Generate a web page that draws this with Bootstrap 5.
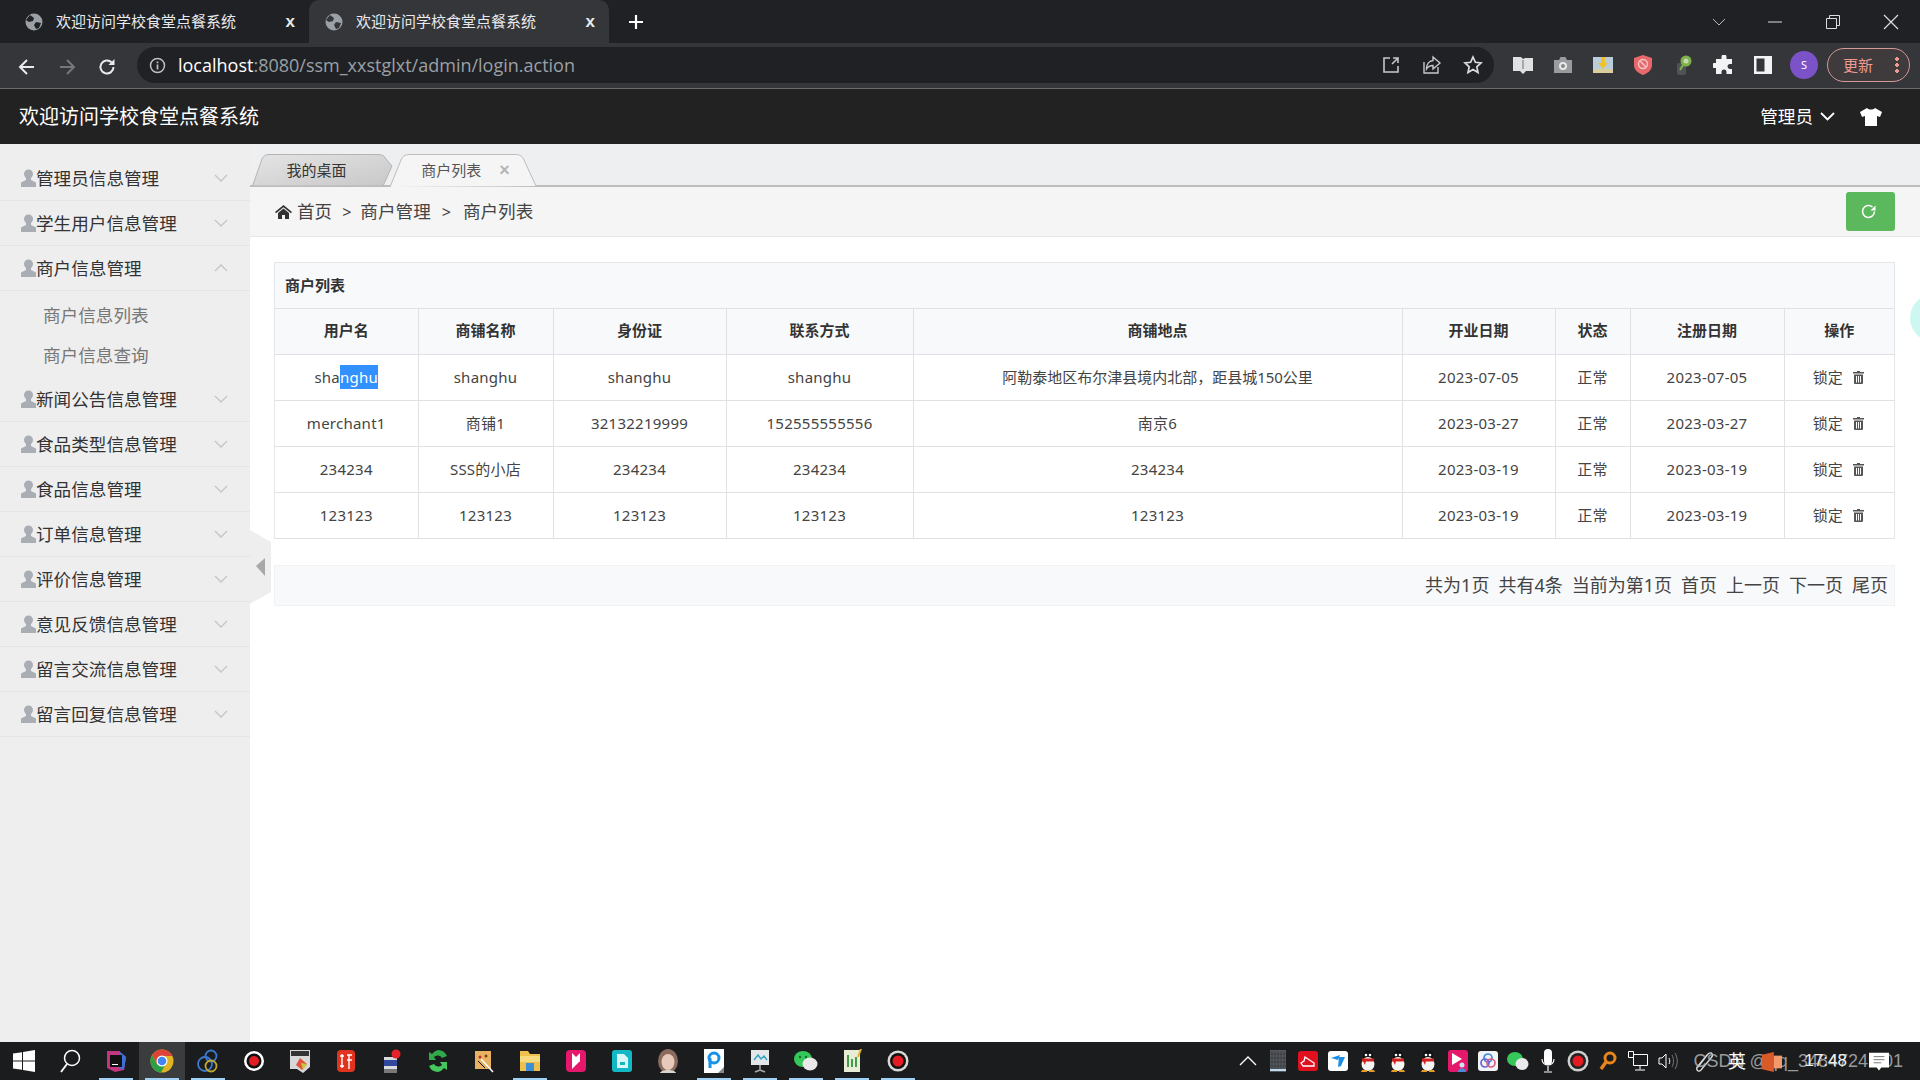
<!DOCTYPE html>
<html lang="zh-CN">
<head>
    <title>欢迎访问学校食堂点餐系统</title>
    <meta charset="utf-8">
    <link href="https://cdn.jsdelivr.net/npm/bootstrap@5.3.3/dist/css/bootstrap.min.css" rel="stylesheet">
    <style>
        html, body { height: 100%; overflow: hidden; }
        body { font-family: "Noto Sans", "Noto Sans CJK SC", sans-serif; color: #333; background: #fff; }

        /* browser window */
        .tabstrip { height: 43px; background: #202124; color: #e8eaed; padding-left: 9px; }
        .btab { width: 300px; height: 43px; padding: 0 14px 0 15px; font-size: 15px; }
        .btab-on { background: #35363a; border-radius: 10px 10px 0 0; }
        .btab-x { font-size: 17px; line-height: 1; margin-left: auto; font-family: "Liberation Sans", sans-serif; font-weight: 700; }
        .plus { margin-left: 15px; width: 24px; }
        .winbtns { margin-left: auto; }
        .winbtn { width: 58px; height: 43px; }
        .winbtn-first { padding-left: 4px; }
        .toolbar { height: 46px; background: #35363a; border-bottom: 1px solid #6a6b6e; padding: 0 0 1px 17px; }
        .navbtn { width: 40px; }
        .omni { height: 36px; width: 1357px; background: #202124; border-radius: 18px; padding: 0 11px 0 12px; color: #9aa0a6; font-family: "Open Sans", sans-serif; font-size: 18px; }
        .omni b { font-weight: 400; color: #fff; }
        .omni span { margin-left: 12px; }
        .omni-end { margin-left: auto; gap: 21px; }
        .extrow { margin-left: 19px; gap: 20px; }
        .avatar { width: 28px; height: 28px; margin-left: -3px; border-radius: 50%; background: #7b52c7; color: #fff; font-size: 11px; }
        .updbtn { margin-left: 9px; width: 83px; height: 34px; border: 1px solid #d69a96; border-radius: 17px; color: #ee9a92; font-size: 15px; padding: 0 10px 0 15px; background: #3f3a3b; }
        .updbtn i { margin-left: auto; width: 4px; height: 18px; background: radial-gradient(circle, #ee9a92 1.8px, transparent 2px) 0 0 / 4px 6px; }

        /* app */
        .apphead { height: 55px; background: #222; color: #fff; padding: 0 38px 0 19px; font-size: 20px; }
        .appuser { font-size: 17.6px; gap: 7px; margin-right: 25px; }
        .appbody { min-height: 0; }
        .sidenav { width: 250px; background: #eeeeef; padding-top: 12px; flex: none; }
        .sideitem { height: 45px; border-bottom: 1px solid #e5e5e6; padding: 0 22px 0 21px; font-size: 17.6px; color: #333; }
        .sideitem .chev { margin-left: auto; }
        .subitems { height: 86px; padding-top: 4px; font-size: 17.6px; color: #777; }
        .subitems div { height: 40px; padding-left: 43px; }
        .mainpane { min-width: 0; }
        .tabbar { height: 43px; background: #eeeff1; border-bottom: 2px solid #bdbdbd; padding: 10px 0 0 2px; }
        .ptab { width: 141px; height: 32px; font-size: 15px; color: #333; padding-right: 12px; }
        .ptab svg { position: absolute; left: 0; top: 0; }
        .ptab span { position: relative; }
        .ptab-two { width: 147px; margin-left: -3px; margin-bottom: -2px; height: 34px; color: #555; padding: 0 0 2px 4px; }
        .ptab-close { color: #b5b5b5; font-size: 18px; line-height: 1; margin-left: 18px; font-family: "Liberation Sans", sans-serif; font-weight: 700; }
        .crumbs { height: 50px; background: #f5f5f5; border-bottom: 1px solid #e7e7e7; padding: 0 25px 0 25px; font-size: 17.6px; color: #444; }
        .crumbs .sep { margin: 0 9px 0 10px; font-size: 16px; }
        .crumbs .sep2 { margin: 0 12px 0 11px; font-size: 16px; }
        .crumbs svg { margin-right: 5px; }
        .refresh { width: 49px; height: 39px; padding: 0; background: #5cb85c; border: 0; border-radius: 3px; }
        .content { padding: 25px 25px 0 24px; }
        .listbox { border: 1px solid #e4e6e9; border-bottom: 0; }
        .listtitle { height: 45px; background: #f7f9fb; padding-left: 10px; font-size: 15px; font-weight: 700; }
        .shoptable { table-layout: fixed; width: 100%; margin: 0; --bs-table-border-color: #dfe1e4; color: #444; font-size: 15px; letter-spacing: .25px; }
        .shoptable th, .shoptable td { height: 46px; padding: 0; text-align: center; vertical-align: middle; }
        .shoptable th { background: #f7f9fb; color: #333; font-size: 15px; font-weight: 700; letter-spacing: 0; padding-bottom: 2px; }
        .shoptable tr > :first-child { border-left: 0; }
        .shoptable tr > :last-child { border-right: 0; }
        .c1 { width: 143px; } .c2 { width: 135px; } .c3 { width: 173px; } .c4 { width: 187px; }
        .c5 { width: 489px; } .c6 { width: 153px; } .c7 { width: 75px; } .c8 { width: 154px; }
        .picked { background: #3390ff; color: #fff; padding: 2px 0; }
        .shoptable .addr { letter-spacing: 0; }
        .shoptable .lockact { font-size: 15px; letter-spacing: 0; padding-right: 2px; }
        .lockact svg { margin-left: 10px; vertical-align: -1px; }
        .pager { margin-top: 26px; height: 41px; background: #f7f9fb; border: 1px solid #f0f2f4; padding-right: 6px; font-size: 18px; gap: 9px; color: #444; }
        .drawer { position: absolute; left: 250px; top: 386px; }
        .tealdot { position: absolute; right: -38px; top: 150px; width: 48px; height: 48px; border-radius: 50%; background: #cdf8f2; }

        /* windows taskbar */
        .taskbar { height: 38px; background: #1b1c1d; flex: none; padding-left: 1px; }
        .tbslot { width: 46px; height: 38px; position: relative; flex: none; }
        .tbslot-run::after { content: ""; position: absolute; left: 6px; right: 6px; bottom: 0; height: 2px; background: #9fd0f5; }
        .tbslot-act { background: #3b3c3d; }
        .tray { margin-left: auto; position: relative; color: #fff; }
        .trayslot { width: 30px; height: 38px; flex: none; }
        .tray-gap { width: 237px; flex: none; }
        .watermark { position: absolute; right: 17px; top: 6px; font-family: "Liberation Sans", sans-serif; font-size: 18px; line-height: 26px; color: #b0b0b0; opacity: .85; white-space: nowrap; }
        .ime { position: absolute; right: 174px; top: 7px; font-size: 18px; line-height: 24px; color: #fff; }
        .clock { position: absolute; right: 73px; top: 8px; font-size: 17px; line-height: 22px; color: #eee; font-family: "Liberation Sans", sans-serif; }
        .overlayico { position: absolute; top: 9px; }
        .clipico { right: 205px; }
        .pptico { right: 138px; top: 10px; }
        .noteico { right: 31px; }
    </style>
</head>
<body class="d-flex flex-column">

<div class="tabstrip d-flex align-items-center flex-none">
    <div class="btab d-flex align-items-center gap-2">
        <svg width="20" height="20" viewBox="0 0 20 20"><circle cx="10" cy="10" r="8.5" fill="#9aa0a6"/><path d="M6 3l4 3-1 3-4 1-3-2zM12 10l5 1-2 5-3 1-2-4z" fill="#202124"/></svg>
        <span class="ms-1">欢迎访问学校食堂点餐系统</span><span class="btab-x">x</span>
    </div>
    <div class="btab btab-on d-flex align-items-center gap-2">
        <svg width="20" height="20" viewBox="0 0 20 20"><circle cx="10" cy="10" r="8.5" fill="#9aa0a6"/><path d="M6 3l4 3-1 3-4 1-3-2zM12 10l5 1-2 5-3 1-2-4z" fill="#35363a"/></svg>
        <span class="ms-1">欢迎访问学校食堂点餐系统</span><span class="btab-x">x</span>
    </div>
    <div class="plus d-flex align-items-center justify-content-center">
        <svg width="18" height="18" viewBox="0 0 18 18"><path d="M9 2v14M2 9h14" stroke="#fff" stroke-width="2.2"/></svg>
    </div>
    <div class="winbtns d-flex">
        <div class="winbtn winbtn-first d-flex align-items-center justify-content-center"><svg width="14" height="8" viewBox="0 0 14 8"><path d="M1 1l6 6 6-6" fill="none" stroke="#bbb"/></svg></div>
        <div class="winbtn d-flex align-items-center justify-content-center"><svg width="14" height="4" viewBox="0 0 14 4"><path d="M0 2h14" stroke="#ddd"/></svg></div>
        <div class="winbtn d-flex align-items-center justify-content-center"><svg width="14" height="14" viewBox="0 0 14 14"><path d="M.5 3.5h10v10H.5zM3.5 3V.5h10v10H11" fill="none" stroke="#ddd"/></svg></div>
        <div class="winbtn d-flex align-items-center justify-content-center"><svg width="16" height="16" viewBox="0 0 16 16"><path d="M1 1l14 14M15 1L1 15" stroke="#ddd" stroke-width="1.2"/></svg></div>
    </div>
</div>

<div class="toolbar d-flex align-items-center flex-none">
    <div class="navbtn"><svg width="20" height="20" viewBox="0 0 20 20"><path d="M17 10H4M10 3l-7 7 7 7" fill="none" stroke="#e8eaed" stroke-width="2"/></svg></div>
    <div class="navbtn"><svg width="20" height="20" viewBox="0 0 20 20"><path d="M3 10h13M10 3l7 7-7 7" fill="none" stroke="#75777a" stroke-width="2"/></svg></div>
    <div class="navbtn"><svg width="20" height="20" viewBox="0 0 20 20"><path d="M16.5 10a6.5 6.5 0 1 1-2-4.7" fill="none" stroke="#e8eaed" stroke-width="2"/><path d="M17.5 2v6h-6z" fill="#e8eaed"/></svg></div>
    <div class="omni d-flex align-items-center">
        <svg width="17" height="17" viewBox="0 0 17 17"><circle cx="8.5" cy="8.5" r="7" fill="none" stroke="#bdc1c6" stroke-width="1.5"/><path d="M8.5 7.5v5M8.5 4.5v1.7" stroke="#bdc1c6" stroke-width="1.7"/></svg>
        <span><b>localhost</b>:8080/ssm_xxstglxt/admin/login.action</span>
        <div class="omni-end d-flex align-items-center">
            <svg width="20" height="20" viewBox="0 0 20 20"><path d="M9 3H3v14h14v-6M11 9l6-6M12 3h5v5" fill="none" stroke="#c4c7cb" stroke-width="1.6"/></svg>
            <svg width="20" height="20" viewBox="0 0 20 20"><path d="M2 7v11h14v-6M11 2l7 6-7 6v-3.500c-3 0-5 1-6.500 3.500 0-4 2-8 6.500-8.500z" fill="none" stroke="#c4c7cb" stroke-width="1.4"/></svg>
            <svg width="20" height="20" viewBox="0 0 20 20"><path d="M10 2l2.400 5.300 5.600.6-4.200 3.900 1.200 5.700L10 14.600 5 17.500l1.200-5.700L2 7.900l5.600-.6z" fill="none" stroke="#dadce0" stroke-width="1.7"/></svg>
        </div>
    </div>
    <div class="extrow d-flex align-items-center">
        <svg width="20" height="20" viewBox="0 0 20 20"><path d="M0 2h8l2 2 2-1h8v13h-7l-3 3-3-3H0z" fill="#dfe1e3"/><path d="M9 5h2v9H9z" fill="#a5a7aa"/></svg>
        <svg width="20" height="20" viewBox="0 0 20 20"><path d="M1 5h5l1.500-3h5L14 5h5v13H1z" fill="#9a9b9e"/><circle cx="10" cy="11" r="4" fill="#e8e8e8"/><circle cx="10" cy="11" r="2" fill="#85878a"/></svg>
        <svg width="20" height="20" viewBox="0 0 20 20"><path d="M0 2h20v16H0z" fill="#b9cddc"/><path d="M0 14h20v4H0z" fill="#d8ce9e"/><path d="M8 2h4v6h3l-5 6-5-6h3z" fill="#efc22a"/></svg>
        <svg width="20" height="20" viewBox="0 0 20 20"><path d="M10 0l9 3v7c0 5-4 8-9 10-5-2-9-5-9-10V3z" fill="#e8696b"/><circle cx="10" cy="9" r="4.500" fill="none" stroke="#f5c7c7" stroke-width="1.400"/><path d="M7 6l6 6" stroke="#f5c7c7" stroke-width="1.400"/></svg>
        <svg width="20" height="20" viewBox="0 0 20 20"><rect x="4" y="8" width="9" height="12" rx="2" fill="#505355"/><circle cx="13" cy="6" r="5.500" fill="#7fb24a"/><circle cx="13" cy="6" r="2.500" fill="#c6d9b4"/><path d="M10 10l-3 5" stroke="#7fb24a" stroke-width="2"/></svg>
        <svg width="20" height="20" viewBox="0 0 20 20"><path d="M7.500 2a2.500 2.500 0 0 1 5 0V4H18v5h-2a2.500 2.500 0 0 0 0 5h2v5h-5.500v-2a2.500 2.500 0 0 0-5 0v2H2v-6H0a2.500 2.500 0 0 1 0-5h2V4h5.500z" fill="#f1f3f4" transform="translate(1 0)"/></svg>
        <svg width="20" height="20" viewBox="0 0 20 20"><path d="M1 1h18v18H1z" fill="#f1f3f4"/><path d="M3.500 3.500h8v13h-8z" fill="#35363a"/></svg>
        <div class="avatar d-flex align-items-center justify-content-center">S</div>
    </div>
    <div class="updbtn d-flex align-items-center">更新<i></i></div>
</div>

<div class="apphead d-flex align-items-center flex-none">
    <span>欢迎访问学校食堂点餐系统</span>
    <div class="appuser d-flex align-items-center ms-auto">
        管理员
        <svg width="15" height="9" viewBox="0 0 15 9"><path d="M1 1l6.500 6.500L14 1" fill="none" stroke="#fff" stroke-width="1.800"/></svg>
    </div>
    <svg width="22" height="18" viewBox="0 0 22 18"><path d="M7 0c2 2 6 2 8 0l7 4-2 5-3-1v10H5V8L2 9 0 4z" fill="#fff"/></svg>
</div>

<div class="appbody d-flex flex-grow-1 position-relative">
    <div class="sidenav">
        <div class="sideitem d-flex align-items-center"><svg width="15" height="18" viewBox="0 0 15 18"><use href="#person"/></svg>管理员信息管理<svg class="chev" width="14" height="8" viewBox="0 0 14 8"><use href="#chevdown"/></svg></div>
        <div class="sideitem d-flex align-items-center"><svg width="15" height="18" viewBox="0 0 15 18"><use href="#person"/></svg>学生用户信息管理<svg class="chev" width="14" height="8" viewBox="0 0 14 8"><use href="#chevdown"/></svg></div>
        <div class="sideitem d-flex align-items-center"><svg width="15" height="18" viewBox="0 0 15 18"><use href="#person"/></svg>商户信息管理<svg class="chev" width="14" height="8" viewBox="0 0 14 8"><path d="M1 7l6-6 6 6" fill="none" stroke="#c3c5c9" stroke-width="1.300"/></svg></div>
        <div class="subitems">
            <div class="d-flex align-items-center">商户信息列表</div>
            <div class="d-flex align-items-center">商户信息查询</div>
        </div>
        <div class="sideitem d-flex align-items-center"><svg width="15" height="18" viewBox="0 0 15 18"><use href="#person"/></svg>新闻公告信息管理<svg class="chev" width="14" height="8" viewBox="0 0 14 8"><use href="#chevdown"/></svg></div>
        <div class="sideitem d-flex align-items-center"><svg width="15" height="18" viewBox="0 0 15 18"><use href="#person"/></svg>食品类型信息管理<svg class="chev" width="14" height="8" viewBox="0 0 14 8"><use href="#chevdown"/></svg></div>
        <div class="sideitem d-flex align-items-center"><svg width="15" height="18" viewBox="0 0 15 18"><use href="#person"/></svg>食品信息管理<svg class="chev" width="14" height="8" viewBox="0 0 14 8"><use href="#chevdown"/></svg></div>
        <div class="sideitem d-flex align-items-center"><svg width="15" height="18" viewBox="0 0 15 18"><use href="#person"/></svg>订单信息管理<svg class="chev" width="14" height="8" viewBox="0 0 14 8"><use href="#chevdown"/></svg></div>
        <div class="sideitem d-flex align-items-center"><svg width="15" height="18" viewBox="0 0 15 18"><use href="#person"/></svg>评价信息管理<svg class="chev" width="14" height="8" viewBox="0 0 14 8"><use href="#chevdown"/></svg></div>
        <div class="sideitem d-flex align-items-center"><svg width="15" height="18" viewBox="0 0 15 18"><use href="#person"/></svg>意见反馈信息管理<svg class="chev" width="14" height="8" viewBox="0 0 14 8"><use href="#chevdown"/></svg></div>
        <div class="sideitem d-flex align-items-center"><svg width="15" height="18" viewBox="0 0 15 18"><use href="#person"/></svg>留言交流信息管理<svg class="chev" width="14" height="8" viewBox="0 0 14 8"><use href="#chevdown"/></svg></div>
        <div class="sideitem d-flex align-items-center"><svg width="15" height="18" viewBox="0 0 15 18"><use href="#person"/></svg>留言回复信息管理<svg class="chev" width="14" height="8" viewBox="0 0 14 8"><use href="#chevdown"/></svg></div>
    </div>

    <div class="mainpane flex-grow-1 position-relative overflow-hidden">
        <div class="tabbar d-flex">
            <div class="ptab position-relative d-flex align-items-center justify-content-center">
                <svg width="141" height="32" viewBox="0 0 141 32"><defs><linearGradient id="tabgrey" x1="0" y1="0" x2="1" y2="1"><stop offset="0" stop-color="#e4e4e4"/><stop offset="1" stop-color="#c8c8c8"/></linearGradient></defs><path d="M0.500 32L10 5Q12 .5 17 .5H126Q132 .5 134 5L140 12 131 32z" fill="url(#tabgrey)" stroke="#b4b4b4"/></svg>
                <span>我的桌面</span>
            </div>
            <div class="ptab ptab-two position-relative d-flex align-items-center justify-content-center">
                <svg width="147" height="34" viewBox="0 0 147 34"><path d="M0 33L11 6Q13 .5 19 .5H126Q132 .5 134 6L146 32" fill="#f5f5f5" stroke="#bcbcbc"/></svg>
                <span>商户列表</span><span class="ptab-close">×</span>
            </div>
        </div>
        <div class="crumbs d-flex align-items-center">
            <svg width="17" height="14" viewBox="0 0 17 14"><path d="M8.500 0L17 7l-1 1.300-7.500-6-7.500 6L0 7zM3 8l5.500-4.500L14 8v6H10V10H7v4H3z" fill="#333"/></svg>
            <span>首页</span><span class="sep">&gt;</span><span>商户管理</span><span class="sep2">&gt;</span><span>商户列表</span>
            <button type="button" class="btn refresh ms-auto d-flex align-items-center justify-content-center">
                <svg width="17" height="17" viewBox="0 0 17 17"><path d="M14.500 8.500a6 6 0 1 1-2-4.500" fill="none" stroke="#fff" stroke-width="1.500"/><path d="M15.500 2.500v5h-5z" fill="#fff"/></svg>
            </button>
        </div>
        <div class="content">
            <div class="listbox">
                <div class="listtitle d-flex align-items-center">商户列表</div>
                <table class="table table-bordered shoptable">
                    <colgroup><col class="c1"><col class="c2"><col class="c3"><col class="c4"><col class="c5"><col class="c6"><col class="c7"><col class="c8"><col></colgroup>
                    <thead>
                        <tr><th>用户名</th><th>商铺名称</th><th>身份证</th><th>联系方式</th><th>商铺地点</th><th>开业日期</th><th>状态</th><th>注册日期</th><th>操作</th></tr>
                    </thead>
                    <tbody>
                        <tr><td>sha<span class="picked">nghu</span></td><td>shanghu</td><td>shanghu</td><td>shanghu</td><td class="addr">阿勒泰地区布尔津县境内北部，距县城150公里</td><td>2023-07-05</td><td>正常</td><td>2023-07-05</td><td class="lockact">锁定<svg width="11" height="13" viewBox="0 0 11 13"><use href="#trash"/></svg></td></tr>
                        <tr><td>merchant1</td><td>商铺1</td><td>32132219999</td><td>152555555556</td><td>南京6</td><td>2023-03-27</td><td>正常</td><td>2023-03-27</td><td class="lockact">锁定<svg width="11" height="13" viewBox="0 0 11 13"><use href="#trash"/></svg></td></tr>
                        <tr><td>234234</td><td>SSS的小店</td><td>234234</td><td>234234</td><td>234234</td><td>2023-03-19</td><td>正常</td><td>2023-03-19</td><td class="lockact">锁定<svg width="11" height="13" viewBox="0 0 11 13"><use href="#trash"/></svg></td></tr>
                        <tr><td>123123</td><td>123123</td><td>123123</td><td>123123</td><td>123123</td><td>2023-03-19</td><td>正常</td><td>2023-03-19</td><td class="lockact">锁定<svg width="11" height="13" viewBox="0 0 11 13"><use href="#trash"/></svg></td></tr>
                    </tbody>
                </table>
            </div>
            <div class="pager d-flex align-items-center justify-content-end">
                <span>共为1页</span><span>共有4条</span><span>当前为第1页</span><span>首页</span><span>上一页</span><span>下一页</span><span>尾页</span>
            </div>
        </div>
        <div class="tealdot"></div>
    </div>

    <svg class="drawer" width="21" height="74" viewBox="0 0 21 74"><path d="M0 0L21 12V62L0 74z" fill="#eeeeef"/><path d="M6 28l9-8v18z" transform="translate(0 8)" fill="#a8a8a8"/></svg>
</div>

<div class="taskbar d-flex">
    <div class="tbslot d-flex align-items-center justify-content-center"><svg width="22" height="22" viewBox="0 0 22 22"><path d="M0 3.500l9-1.300v8.300H0zM10 2l12-2v10.500H10zM0 11.500h9v8.300l-9-1.300zM10 11.500h12V22l-12-2z" fill="#fff"/></svg></div>
    <div class="tbslot d-flex align-items-center justify-content-center"><svg width="22" height="24" viewBox="0 0 22 24"><circle cx="13" cy="9" r="7.500" fill="none" stroke="#fff" stroke-width="1.500"/><path d="M8 15l-6 8" stroke="#fff" stroke-width="1.800"/></svg></div>
    <div class="tbslot tbslot-run d-flex align-items-center justify-content-center"><svg width="22" height="22" viewBox="0 0 22 22"><path d="M2 1l12 0 7 6-2 13-9 2-8-4z" fill="#c2357f"/><path d="M14 1l7 6-2 13-5-2z" fill="#3c6fd8"/><rect x="5" y="5" width="12" height="12" fill="#111"/><rect x="7" y="14" width="6" height="1" fill="#fff"/></svg></div>
    <div class="tbslot tbslot-run tbslot-act d-flex align-items-center justify-content-center"><svg width="24" height="24" viewBox="0 0 24 24"><circle cx="12" cy="12" r="11.500" fill="#e3b321"/><path d="M12 .5A11.500 11.500 0 0 0 2 6l5 9 5-8h10.500A11.500 11.500 0 0 0 12 .5z" fill="#dc4437"/><path d="M2 6A11.500 11.500 0 0 0 11 23.500l4.500-8H7z" fill="#2c9f47"/><circle cx="12" cy="12" r="5.500" fill="#fff"/><circle cx="12" cy="12" r="4.300" fill="#4285f4"/></svg></div>
    <div class="tbslot tbslot-run d-flex align-items-center justify-content-center"><svg width="22" height="24" viewBox="0 0 22 24"><circle cx="14" cy="7" r="5.500" fill="none" stroke="#3a7ad1" stroke-width="1.800"/><circle cx="8" cy="15" r="7" fill="none" stroke="#3a7ad1" stroke-width="1.800"/><circle cx="14" cy="17" r="5.500" fill="none" stroke="#c2a72e" stroke-width="1.800"/></svg></div>
    <div class="tbslot d-flex align-items-center justify-content-center"><svg width="22" height="22" viewBox="0 0 22 22"><circle cx="11" cy="11" r="10" fill="#fff"/><circle cx="11" cy="11" r="7.500" fill="#111"/><circle cx="11" cy="11" r="5" fill="#e31c23"/></svg></div>
    <div class="tbslot d-flex align-items-center justify-content-center"><svg width="22" height="24" viewBox="0 0 22 24"><path d="M1 1h20v17l-7 6-6-4H1z" fill="#d8d8d8"/><path d="M2 2h18v5H2z" fill="#333"/><path d="M11 9l7 6-5 6-6-5z" fill="#e2533e"/><path d="M12 14l6 1-4 6z" fill="#c9c63a"/></svg></div>
    <div class="tbslot d-flex align-items-center justify-content-center"><svg width="20" height="22" viewBox="0 0 20 22"><rect x="1" y="0" width="18" height="22" rx="4" fill="#e1341e"/><path d="M6 4v14M4 6h4M4 16h4M11 5h5M13 5v14M11 10h5" stroke="#fff" stroke-width="1.400" fill="none"/></svg></div>
    <div class="tbslot d-flex align-items-center justify-content-center"><svg width="20" height="24" viewBox="0 0 20 24"><rect x="2" y="8" width="13" height="16" fill="#d9dbe1"/><rect x="2" y="11" width="13" height="6" fill="#32479e"/><rect x="2" y="20" width="13" height="4" fill="#777"/><circle cx="14" cy="5" r="4.500" fill="#e3242b"/></svg></div>
    <div class="tbslot d-flex align-items-center justify-content-center"><svg width="20" height="24" viewBox="0 0 20 24"><path d="M10 1a10 10 0 0 1 9 6l-5 2a5 5 0 0 0-8-1l2 3H1V3l3 2a10 10 0 0 1 6-4z" fill="#31a84a"/><path d="M10 23a10 10 0 0 1-9-6l5-2a5 5 0 0 0 8 1l-2-3h7v8l-3-2a10 10 0 0 1-6 4z" fill="#45c75d"/></svg></div>
    <div class="tbslot d-flex align-items-center justify-content-center"><svg width="22" height="24" viewBox="0 0 22 24"><rect x="2" y="2" width="16" height="18" fill="#e9b262"/><circle cx="7" cy="8" r="1.500" fill="#b5312a"/><circle cx="13" cy="7" r="1.500" fill="#7a3d1d"/><path d="M8 10l12 13" stroke="#fff" stroke-width="1.500"/><path d="M5 12l7 7" stroke="#111"/></svg></div>
    <div class="tbslot tbslot-run d-flex align-items-center justify-content-center"><svg width="22" height="22" viewBox="0 0 22 22"><path d="M1 1h8l2 3h10v17H1z" fill="#efc14c"/><path d="M1 6h20v6H1z" fill="#f7dc7f"/><rect x="7" y="13" width="8" height="8" fill="#3d8fd6"/></svg></div>
    <div class="tbslot d-flex align-items-center justify-content-center"><svg width="20" height="22" viewBox="0 0 20 22"><rect width="20" height="22" rx="4" fill="#e6186c"/><path d="M6 3v16l8-8zM14 3l-5 5 5 4z" fill="#fff"/></svg></div>
    <div class="tbslot d-flex align-items-center justify-content-center"><svg width="20" height="22" viewBox="0 0 20 22"><rect width="20" height="22" rx="3" fill="#14b8c4"/><path d="M5 4h7l4 4v10H5z" fill="#d8f6f8"/><path d="M8 12h5v3H8z" fill="#14b8c4"/></svg></div>
    <div class="tbslot d-flex align-items-center justify-content-center"><svg width="22" height="24" viewBox="0 0 22 24"><ellipse cx="11" cy="12" rx="10" ry="12" fill="#8a6a5e"/><ellipse cx="11" cy="13" rx="6.500" ry="8" fill="#e6c9bb"/><path d="M3 24c1-4 15-4 16 0z" fill="#d9d4d0"/></svg></div>
    <div class="tbslot tbslot-run d-flex align-items-center justify-content-center"><svg width="20" height="24" viewBox="0 0 20 24"><path d="M0 0h20v24H0z" fill="#fff"/><path d="M14 24L20 18v6z" fill="#888"/><circle cx="10" cy="9" r="5" fill="none" stroke="#1792e6" stroke-width="3"/><path d="M6 9v10" stroke="#1792e6" stroke-width="3"/></svg></div>
    <div class="tbslot tbslot-run d-flex align-items-center justify-content-center"><svg width="22" height="24" viewBox="0 0 22 24"><rect x="2" y="1" width="18" height="15" fill="#e4e7ea"/><path d="M5 11l4-5 3 4 3-3 3 4" fill="none" stroke="#35a3c4" stroke-width="1.400"/><path d="M11 16v5M6 23l5-2 5 2" stroke="#aaa" stroke-width="1.500" fill="none"/></svg></div>
    <div class="tbslot tbslot-run d-flex align-items-center justify-content-center"><svg width="24" height="22" viewBox="0 0 24 22"><ellipse cx="9" cy="9" rx="9" ry="8" fill="#35c75a"/><ellipse cx="16" cy="14" rx="7.500" ry="6.500" fill="#e9e9e9"/><circle cx="6" cy="7" r="1.200" fill="#146b2e"/><circle cx="12" cy="7" r="1.200" fill="#146b2e"/></svg></div>
    <div class="tbslot tbslot-run d-flex align-items-center justify-content-center"><svg width="20" height="24" viewBox="0 0 20 24"><path d="M2 1h16v22H2z" fill="#e9edd5"/><path d="M6 6v12M10 10v8M14 8v10" stroke="#3f9c4a" stroke-width="2"/><path d="M19 0l-3 8" stroke="#e5b32a" stroke-width="2"/></svg></div>
    <div class="tbslot tbslot-run d-flex align-items-center justify-content-center"><svg width="22" height="22" viewBox="0 0 22 22"><circle cx="11" cy="11" r="10.500" fill="#d8d8d8"/><circle cx="11" cy="11" r="8" fill="#111"/><circle cx="11" cy="11" r="5.500" fill="#e31c23"/></svg></div>

    <div class="tray d-flex">
        <div class="trayslot d-flex align-items-center justify-content-center"><svg width="18" height="10" viewBox="0 0 18 10"><path d="M1 9l8-8 8 8" fill="none" stroke="#fff" stroke-width="1.300"/></svg></div>
        <div class="trayslot d-flex align-items-center justify-content-center"><svg width="16" height="22" viewBox="0 0 16 22"><rect width="16" height="22" fill="#55585c"/><path d="M2 1v18M5 1v18M8 1v18M11 1v18M14 1v18M0 4h16M0 8h16M0 12h16M0 16h16" stroke="#35383b" stroke-width=".7"/><rect y="19" width="16" height="2" fill="#bcdcf2"/></svg></div>
        <div class="trayslot d-flex align-items-center justify-content-center"><svg width="20" height="20" viewBox="0 0 20 20"><rect width="20" height="20" rx="3" fill="#e0101e"/><path d="M5 15l-2-3 3-2 1-4 3 2 6 4v3z" fill="none" stroke="#fff" stroke-width="1.300"/></svg></div>
        <div class="trayslot d-flex align-items-center justify-content-center"><svg width="20" height="20" viewBox="0 0 20 20"><rect width="20" height="20" rx="3" fill="#fff"/><path d="M3 7l9-3-2 5zM11 6h6l-4 9-3 1z" fill="#1a8fe8"/></svg></div>
        <div class="trayslot d-flex align-items-center justify-content-center"><svg width="16" height="22" viewBox="0 0 16 22"><use href="#qq"/></svg></div>
        <div class="trayslot d-flex align-items-center justify-content-center"><svg width="16" height="22" viewBox="0 0 16 22"><use href="#qq"/></svg></div>
        <div class="trayslot d-flex align-items-center justify-content-center"><svg width="16" height="22" viewBox="0 0 16 22"><use href="#qq"/></svg></div>
        <div class="trayslot d-flex align-items-center justify-content-center"><svg width="20" height="22" viewBox="0 0 20 22"><rect width="20" height="22" rx="3" fill="#e6186c"/><path d="M4 3l10 6-10 6z" fill="#fff"/><circle cx="14" cy="15" r="2.500" fill="#cfe3f7"/><path d="M10 22c0-5 8-5 8 0z" fill="#4d8ad6"/></svg></div>
        <div class="trayslot d-flex align-items-center justify-content-center"><svg width="20" height="20" viewBox="0 0 20 20"><rect width="20" height="20" rx="3" fill="#f2f4f7"/><circle cx="10" cy="7" r="4" fill="none" stroke="#3f8be0" stroke-width="1.700"/><circle cx="7" cy="12" r="4" fill="none" stroke="#6b63d9" stroke-width="1.700"/><circle cx="13" cy="12" r="4" fill="none" stroke="#d95f7e" stroke-width="1.700"/></svg></div>
        <div class="trayslot d-flex align-items-center justify-content-center"><svg width="22" height="20" viewBox="0 0 22 20"><ellipse cx="8" cy="8" rx="8" ry="7" fill="#35c75a"/><ellipse cx="15" cy="13" rx="6.500" ry="6" fill="#e9e9e9"/></svg></div>
        <div class="trayslot d-flex align-items-center justify-content-center"><svg width="14" height="24" viewBox="0 0 14 24"><rect x="3" y="0" width="8" height="16" rx="4" fill="#fff"/><path d="M1 10c0 8 12 8 12 0M7 17v5M3 23h8" fill="none" stroke="#fff" stroke-width="1.200"/></svg></div>
        <div class="trayslot d-flex align-items-center justify-content-center"><svg width="22" height="22" viewBox="0 0 22 22"><circle cx="11" cy="11" r="10.500" fill="#cfcfcf"/><circle cx="11" cy="11" r="8" fill="#222"/><circle cx="11" cy="11" r="5.500" fill="#e31c23"/></svg></div>
        <div class="trayslot d-flex align-items-center justify-content-center"><svg width="18" height="20" viewBox="0 0 18 20"><circle cx="11" cy="7" r="5" fill="none" stroke="#e8851c" stroke-width="3"/><path d="M7 11l-5 7" stroke="#e8851c" stroke-width="3.500"/></svg></div>
        <div class="trayslot d-flex align-items-center justify-content-center"><svg width="20" height="20" viewBox="0 0 20 20"><path d="M5.500 3.500h14v11h-14zM12 14.500v4M7 19h10M.5 .5h5v6h-5z" fill="none" stroke="#fff"/></svg></div>
        <div class="trayslot d-flex align-items-center justify-content-center"><svg width="20" height="20" viewBox="0 0 20 20"><path d="M1 7h3l4-4v14l-4-4H1z" fill="none" stroke="#fff"/><path d="M11 7c1 2 1 4 0 6" fill="none" stroke="#fff"/><path d="M14 4c2 4 2 8 0 12M17 2c3 5 3 11 0 16" fill="none" stroke="#777"/></svg></div>
        <div class="tray-gap"></div>
        <svg class="overlayico clipico" width="22" height="24" viewBox="0 0 20 24"><path d="M4 16L14 3c4-3 6 1 3 4L7 19c-3 3-6-1-3-4l9-11" fill="none" stroke="#ddd" stroke-width="1.300"/></svg>
        <div class="watermark">CSDN @qq_34847241 01</div>
        <div class="ime">英</div>
        <svg class="overlayico pptico" width="20" height="20" viewBox="0 0 22 22"><path d="M0 3l13-3v22L0 19z" fill="#d85a28"/><path d="M13 4h9v14h-9z" fill="#f09a6e"/></svg>
        <div class="clock">17:48</div>
        <svg class="overlayico noteico" width="20" height="22" viewBox="0 0 26 24"><path d="M0 0h26v19H16l-3 4-3-4H0z" fill="#fff"/><path d="M6 5h14M6 9h14M6 13h10" stroke="#555"/></svg>
    </div>
</div>

<svg width="0" height="0" class="position-absolute">
    <defs>
        <g id="person"><circle cx="7.500" cy="5" r="4.500" fill="#a9adb4"/><path d="M5 9h5v2l5 2.500V18H0v-4.500L5 11z" fill="#a9adb4"/></g>
        <path id="chevdown" d="M1 1l6 6 6-6" fill="none" stroke="#c3c5c9" stroke-width="1.300"/>
        <path id="trash" d="M4 0h3v1h4v1.500H0V1h4zM1 3.500h9V12a1 1 0 0 1-1 1H2a1 1 0 0 1-1-1zM3 5v6.500h1V5zM5 5v6.500h1V5zM7 5v6.500h1V5z" fill="#555" fill-rule="evenodd"/>
        <g id="qq"><ellipse cx="8" cy="6" rx="5" ry="6" fill="#111"/><ellipse cx="8" cy="14" rx="6.500" ry="7" fill="#f4f4f4"/><rect x="2" y="8.500" width="12" height="3" fill="#d2201f"/><path d="M3 11l3 0-1 4z" fill="#d2201f"/><circle cx="6" cy="5" r="1.300" fill="#fff"/><circle cx="10" cy="5" r="1.300" fill="#fff"/><path d="M2 20h5v2H1zM9 20h5l1 2H9z" fill="#e79a1d"/></g>
    </defs>
</svg>

<script src="https://cdn.jsdelivr.net/npm/bootstrap@5.3.3/dist/js/bootstrap.bundle.min.js"></script>
</body>
</html>
